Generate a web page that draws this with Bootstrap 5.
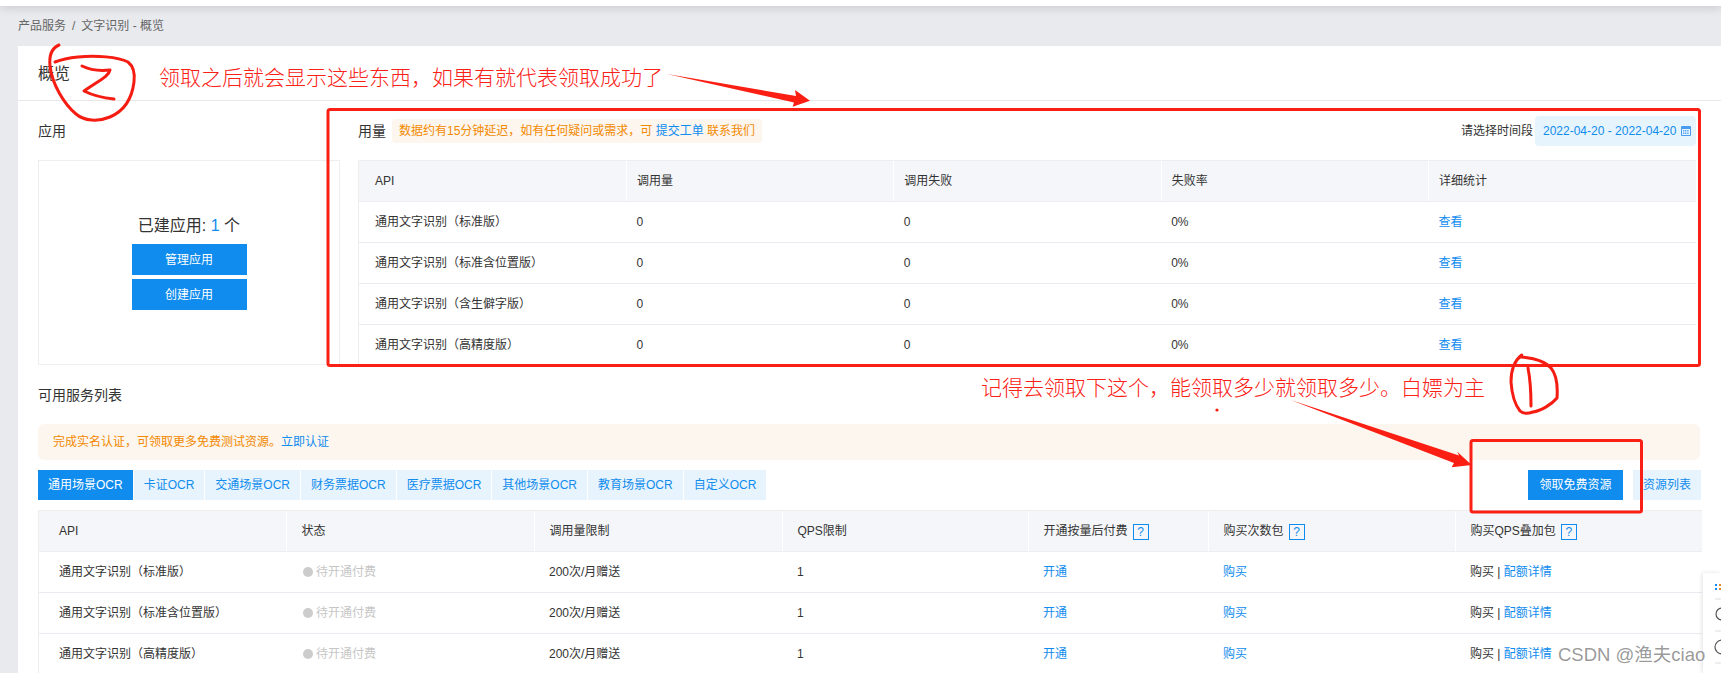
<!DOCTYPE html>
<html lang="zh-CN">
<head>
    <meta charset="UTF-8">
    <meta name="viewport" content="width=device-width, initial-scale=1.0">
    <title>文字识别 - 概览</title>
    <link href="https://cdn.jsdelivr.net/npm/bootstrap@5.3.0/dist/css/bootstrap.min.css" rel="stylesheet">
    <style>
        body {
            position: relative;
            width: 1721px;
            height: 673px;
            overflow: hidden;
            background: #e8eaee;
            color: #333;
            font-family: "Liberation Sans", "Noto Sans CJK SC", sans-serif;
            font-size: 12px;
            line-height: 18px;
        }
        a { color: #108cee; text-decoration: none; }
        .top-strip { height: 6px; background: #fff; box-shadow: 0 2px 8px rgba(0, 0, 0, .16); }
        .crumbs { height: 40px; padding: 11px 0 0 18px; }
        .crumbs .breadcrumb { margin: 0; --bs-breadcrumb-item-padding-x: 6px; --bs-breadcrumb-divider-color: #666; }
        .crumbs .breadcrumb-item, .crumbs .breadcrumb-item.active { color: #666; font-size: 12px; }
        .sheet { margin-left: 18px; height: 627px; background: #fff; overflow: hidden; }
        .sheet-head { height: 55px; padding: 19px 0 0 20px; border-bottom: 1px solid #e8e8e8; font-size: 16px; line-height: 18px; }
        .sheet-body { padding: 15px 20px 0 20px; }
        .side-col { width: 302px; margin-right: 18px; flex: none; }
        .main-col { flex: 1; min-width: 0; padding-right: 5px; position: relative; }
        .sec-title { height: 30px; margin-bottom: 14px; font-size: 14px; line-height: 30px; }
        .app-box { height: 205px; border: 1px solid #eee; font-size: 16px; }
        .app-box .count { line-height: 22px; margin-bottom: 3px; }
        .app-box .btn { width: 115px; height: 31px; margin-top: 4px; }
        .btn-blue { background: #108cee; color: #fff; border: 0; border-radius: 0; padding: 0; font-size: 12px; line-height: 30px; }
        .btn-pale { background: #e8f4fd; color: #108cee; border: 0; border-radius: 0; padding: 0; font-size: 12px; line-height: 30px; }
        .usage-note { height: 24px; margin-left: 6px; padding: 0 7px; background: #fcf6ef; border-radius: 4px; color: #f38900; font-size: 12px; line-height: 24px; white-space: nowrap; }
        .date-label { margin-right: 2px; font-size: 12px; }
        .date-pill { width: 161px; height: 30px; padding-left: 8px; background: #e6f4fd; border-radius: 4px; color: #108cee; font-size: 12px; line-height: 30px; white-space: nowrap; }
        .date-pill svg { margin-left: 5px; flex: none; }
        .table-clip { height: 205px; overflow: hidden; border-left: 1px solid #eee; }
        .grid-table { width: 100%; table-layout: fixed; margin: 0; font-size: 12px; color: #333; }
        .grid-table > :not(caption) > * > * { height: 41px; padding: 0 0 0 10px; vertical-align: middle; border-bottom: 1px solid #e9ebf1; color: #333; background: #fff; box-shadow: none; }
        .grid-table thead th { font-weight: 400; background: #f5f6f9; border-bottom-color: #eceef2; border-top: 1px solid #eee; border-left: 1px solid #fff; }
        .grid-table thead th:first-child { border-left: 0; }
        .grid-table > :not(caption) > * > *:first-child { padding-left: 16px; }
        .scroll-thumb { position: absolute; right: 0; top: 42px; width: 3px; height: 17px; background: #aaa; border-radius: 1px; }
        .sec-title-low { height: 18px; margin: 21px 0 20px; font-size: 14px; line-height: 18px; }
        .notice-bar { height: 36px; margin: 0 1px 10px 0; padding: 0 15px; background: #fcf6ef; border: 0; border-radius: 6px; color: #f38900; line-height: 36px; }
        .scene-tabs { gap: 1px; }
        .scene-tabs .nav-link { height: 30px; padding: 0 10px; background: #e8f4fd; color: #108cee; border-radius: 0; font-size: 12px; line-height: 30px; }
        .scene-tabs .nav-link.active { background: #108cee; color: #fff; }
        .right-btns { gap: 10px; }
        .right-btns .btn { height: 30px; }
        .right-btns .btn-blue { width: 95px; }
        .right-btns .btn-pale { width: 68px; }
        .service-wrap { margin-top: 10px; border-left: 1px solid #eee; border-right: 1px solid #eee; }
        .service-table > :not(caption) > * > * { padding-left: 15px; }
        .service-table > :not(caption) > * > *:first-child { padding-left: 20px; }
        .w-a { width: 247px; }
        .w-b { width: 248px; }
        .w-c { width: 246px; }
        .w-d { width: 180px; }
        .hint-box { display: inline-block; width: 16px; height: 16px; margin-left: 5px; border: 1px solid #108cee; color: #108cee; font-size: 12px; line-height: 14px; text-align: center; vertical-align: middle; }
        .service-table tbody td.state-off { padding-left: 17px; color: #c6c6c6; }
        .state-off::before { content: ""; display: inline-block; width: 10px; height: 10px; margin-right: 3px; border-radius: 50%; background: #ccc; vertical-align: -1px; }
        .float-tools { position: absolute; left: 1703px; top: 573px; width: 18px; height: 100px; background: #fff; box-shadow: -1px 0 4px rgba(0, 0, 0, .12); }
        .ink-layer { position: absolute; left: 0; top: 0; pointer-events: none; }
        .ink-note { position: absolute; color: #fb2116; font-size: 21px; font-weight: 300; line-height: 28px; white-space: nowrap; pointer-events: none; }
        .note-one { left: 159px; top: 64px; }
        .note-two { left: 981px; top: 374px; }
        .water-mark { position: absolute; left: 1558px; top: 643px; color: rgba(95, 95, 95, .65); font-size: 18.5px; line-height: 24px; white-space: nowrap; }
    </style>
</head>
<body>

    <div class="top-strip"></div>

    <nav class="crumbs" aria-label="breadcrumb">
        <ol class="breadcrumb">
            <li class="breadcrumb-item">产品服务</li>
            <li class="breadcrumb-item active">文字识别 - 概览</li>
        </ol>
    </nav>

    <main class="sheet">
        <div class="sheet-head">概览</div>
        <div class="sheet-body">

            <div class="d-flex">
                <div class="side-col">
                    <div class="sec-title">应用</div>
                    <div class="app-box d-flex flex-column align-items-center justify-content-center">
                        <div class="count">已建应用: <a href="#">1</a> 个</div>
                        <button class="btn btn-blue">管理应用</button>
                        <button class="btn btn-blue">创建应用</button>
                    </div>
                </div>

                <div class="main-col">
                    <div class="d-flex align-items-center justify-content-between sec-title">
                        <div class="d-flex align-items-center">
                            <span>用量</span>
                            <span class="usage-note">数据约有15分钟延迟，如有任何疑问或需求，可 <a href="#">提交工单</a> 联系我们</span>
                        </div>
                        <div class="d-flex align-items-center">
                            <span class="date-label">请选择时间段</span>
                            <span class="date-pill d-flex align-items-center">2022-04-20 - 2022-04-20
                                <svg width="10" height="10" viewBox="0 0 10 10"><rect width="10" height="10" rx="1" fill="#4a9cf0"/><rect x="1" y="3" width="8" height="6" fill="#e6f4fd"/><path d="M2 4.5h6M2 6h6M2 7.5h6" stroke="#4a9cf0" stroke-width=".9" stroke-dasharray="1.2 .6"/></svg>
                            </span>
                        </div>
                    </div>
                    <div class="table-clip">
                        <table class="table grid-table">
                            <thead>
                                <tr><th>API</th><th>调用量</th><th>调用失败</th><th>失败率</th><th>详细统计</th></tr>
                            </thead>
                            <tbody>
                                <tr><td>通用文字识别（标准版）</td><td>0</td><td>0</td><td>0%</td><td><a href="#">查看</a></td></tr>
                                <tr><td>通用文字识别（标准含位置版）</td><td>0</td><td>0</td><td>0%</td><td><a href="#">查看</a></td></tr>
                                <tr><td>通用文字识别（含生僻字版）</td><td>0</td><td>0</td><td>0%</td><td><a href="#">查看</a></td></tr>
                                <tr><td>通用文字识别（高精度版）</td><td>0</td><td>0</td><td>0%</td><td><a href="#">查看</a></td></tr>
                            </tbody>
                        </table>
                    </div>
                    <div class="scroll-thumb"></div>
                </div>
            </div>

            <div class="sec-title-low">可用服务列表</div>
            <div class="alert notice-bar">完成实名认证，可领取更多免费测试资源。<a href="#">立即认证</a></div>

            <div class="d-flex justify-content-between">
                <ul class="nav nav-pills scene-tabs">
                    <li class="nav-item"><a class="nav-link active" href="#">通用场景OCR</a></li>
                    <li class="nav-item"><a class="nav-link" href="#">卡证OCR</a></li>
                    <li class="nav-item"><a class="nav-link" href="#">交通场景OCR</a></li>
                    <li class="nav-item"><a class="nav-link" href="#">财务票据OCR</a></li>
                    <li class="nav-item"><a class="nav-link" href="#">医疗票据OCR</a></li>
                    <li class="nav-item"><a class="nav-link" href="#">其他场景OCR</a></li>
                    <li class="nav-item"><a class="nav-link" href="#">教育场景OCR</a></li>
                    <li class="nav-item"><a class="nav-link" href="#">自定义OCR</a></li>
                </ul>
                <div class="d-flex right-btns">
                    <button class="btn btn-blue">领取免费资源</button>
                    <button class="btn btn-pale">资源列表</button>
                </div>
            </div>

            <div class="service-wrap">
                <table class="table grid-table service-table">
                    <colgroup>
                        <col class="w-a"><col class="w-b"><col class="w-b"><col class="w-c"><col class="w-d"><col class="w-a"><col class="w-a">
                    </colgroup>
                    <thead>
                        <tr>
                            <th>API</th><th>状态</th><th>调用量限制</th><th>QPS限制</th>
                            <th>开通按量后付费<span class="hint-box">?</span></th>
                            <th>购买次数包<span class="hint-box">?</span></th>
                            <th>购买QPS叠加包<span class="hint-box">?</span></th>
                        </tr>
                    </thead>
                    <tbody>
                        <tr><td>通用文字识别（标准版）</td><td class="state-off">待开通付费</td><td>200次/月赠送</td><td>1</td><td><a href="#">开通</a></td><td><a href="#">购买</a></td><td>购买 | <a href="#">配额详情</a></td></tr>
                        <tr><td>通用文字识别（标准含位置版）</td><td class="state-off">待开通付费</td><td>200次/月赠送</td><td>1</td><td><a href="#">开通</a></td><td><a href="#">购买</a></td><td>购买 | <a href="#">配额详情</a></td></tr>
                        <tr><td>通用文字识别（高精度版）</td><td class="state-off">待开通付费</td><td>200次/月赠送</td><td>1</td><td><a href="#">开通</a></td><td><a href="#">购买</a></td><td>购买 | <a href="#">配额详情</a></td></tr>
                    </tbody>
                </table>
            </div>
        </div>
    </main>

    <!-- page's own floating tool rail, cut by the window edge -->
    <aside class="float-tools">
        <svg width="18" height="100" viewBox="0 0 18 100">
            <g fill="#108cee"><rect x="12" y="11" width="2" height="2"/><rect x="12" y="15" width="2" height="2"/></g>
            <g fill="#e08a2c"><rect x="16" y="11" width="2" height="2"/><rect x="16" y="15" width="2" height="2"/></g>
            <path d="M12 26h6M12 58h6M12 90h6" stroke="#ddd"/>
            <circle cx="19" cy="41" r="6" fill="none" stroke="#555" stroke-width="1.2"/>
            <circle cx="19" cy="74" r="7" fill="none" stroke="#555" stroke-width="1.2"/>
        </svg>
    </aside>

    <!-- hand drawn annotations on top of the screenshot -->
    <svg class="ink-layer" width="1721" height="673" viewBox="0 0 1721 673" fill="none">
        <g stroke="#fa2015" stroke-width="3" stroke-linejoin="round">
            <rect x="328" y="109.5" width="1371.5" height="256" rx="2"/>
            <rect x="1471" y="440.5" width="170.5" height="71.5" rx="2"/>
        </g>
        <g fill="#fb1e12">
            <polygon points="667,74 796,96 795,90 810,100.7 792.7,106.7 794,102.5"/>
            <polygon points="1290.7,400 1459,455.5 1457.3,451.7 1471.7,465 1451.7,467.3 1454,463"/>
            <circle cx="1217" cy="410" r="1.6"/>
        </g>
        <g stroke="#f51c12" stroke-width="3" stroke-linecap="round" stroke-linejoin="round">
            <path d="M59 45C52 48 49 56 50 66C52 84 64 104 76 114C84 121 98 122 110 117C124 111 132 98 134 82C135 74 133 66 128 62C118 57 96 55 78 57C68 58 60 60 55 62"/>
            <path d="M82 66C90 70 100 71 110 70C109 76 100 80 84 91C92 95 104 98 114 99"/>
            <path d="M1521.7 355C1514 361 1511 372 1511 382C1512 396 1516 406 1520 411C1524 415 1530 413 1533 412C1541 411 1552 404 1557 398C1558 384 1556 374 1551 368C1545 361 1533 358 1521 357"/>
            <path d="M1528 368C1530 378 1531 392 1531 406"/>
        </g>
    </svg>
    <div class="ink-note note-one">领取之后就会显示这些东西，如果有就代表领取成功了</div>
    <div class="ink-note note-two">记得去领取下这个，能领取多少就领取多少。白嫖为主</div>

    <div class="water-mark">CSDN @渔夫ciao</div>

    <script src="https://cdn.jsdelivr.net/npm/bootstrap@5.3.0/dist/js/bootstrap.bundle.min.js"></script>
</body>
</html>
